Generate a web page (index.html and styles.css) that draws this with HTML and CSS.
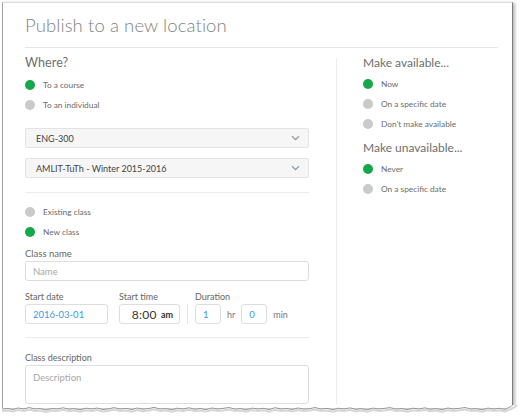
FILE: index.html
```html
<!DOCTYPE html>
<html>
<head>
<meta charset="utf-8">
<link rel="stylesheet" href="styles.css">
</head>
<body>
<div class="shot">
  <div class="frame">
    <div class="header"><h1 class="title">Publish to a new location</h1></div>
    <div class="cols">
      <div class="left">
        <div class="sec-title">Where?</div>
        <div class="radios r-where">
          <div class="radio on"><span class="dot"></span>To a course</div>
          <div class="radio"><span class="dot"></span>To an individual</div>
        </div>
        <div class="select s1"><span>ENG-300</span><svg class="chev" width="9" height="6" viewBox="0 0 9 6"><path d="M1 1.2 L4.5 4.5 L8 1.2" fill="none" stroke="#8fa0b4" stroke-width="1.3"/></svg></div>
        <div class="select s2"><span>AMLIT-TuTh - Winter 2015-2016</span><svg class="chev" width="9" height="6" viewBox="0 0 9 6"><path d="M1 1.2 L4.5 4.5 L8 1.2" fill="none" stroke="#8fa0b4" stroke-width="1.3"/></svg></div>
        <div class="hdiv d1"></div>
        <div class="radios r-class">
          <div class="radio"><span class="dot"></span>Existing class</div>
          <div class="radio on"><span class="dot"></span>New class</div>
        </div>
        <div class="lbl l-name">Class name</div>
        <div class="input full"><span class="ph">Name</span></div>
        <div class="row3">
          <div class="fld">
            <div class="lbl">Start date</div>
            <div class="input w-date blue">2016-03-01</div>
          </div>
          <div class="fld">
            <div class="lbl">Start time</div>
            <div class="input w-time"><span class="t">8:00</span><span class="am">am</span></div>
          </div>
          <div class="vsep"></div>
          <div class="fld">
            <div class="lbl">Duration</div>
            <div class="durrow">
              <div class="input w-num blue">1</div><span class="unit">hr</span>
              <div class="input w-num blue">0</div><span class="unit">min</span>
            </div>
          </div>
        </div>
        <div class="hdiv d2"></div>
        <div class="lbl l-desc">Class description</div>
        <div class="input area"><span class="ph">Description</span></div>
      </div>
      <div class="vline"></div>
      <div class="right">
        <div class="sec-title">Make available...</div>
        <div class="radios r-av">
          <div class="radio on"><span class="dot"></span>Now</div>
          <div class="radio"><span class="dot"></span>On a specific date</div>
          <div class="radio"><span class="dot"></span>Don't make available</div>
        </div>
        <div class="sec-title t-unav">Make unavailable...</div>
        <div class="radios r-unav">
          <div class="radio on"><span class="dot"></span>Never</div>
          <div class="radio"><span class="dot"></span>On a specific date</div>
        </div>
      </div>
    </div>
  </div>
  <svg class="tear" width="518" height="14" viewBox="0 0 518 14">
    <path d="M0,4 L6,3.5 L11,4.5 L16,3 L22,4 L27,2.5 L33,4 L38,3.5 L44,5 L50,3.5 L55,4 L61,2.8 L67,4.2 L72,3.6 L78,4.8 L84,3.2 L90,4 L95,3 L101,4.5 L107,3.8 L112,2.6 L118,4 L124,3.4 L130,4.6 L135,3 L141,4.2 L147,3.5 L152,2.4 L158,4 L164,3.6 L170,4.8 L175,3.2 L181,4 L187,2.8 L193,4.3 L198,3.5 L204,4.6 L210,3 L216,4 L221,3.4 L227,2.5 L233,4.1 L239,3.6 L244,4.8 L250,3.1 L256,4 L262,3.3 L267,4.6 L273,2.7 L279,4 L285,3.5 L290,4.5 L296,3 L302,4.1 L308,3.6 L313,2.5 L319,4 L325,3.4 L331,4.7 L336,3.2 L342,4 L348,2.9 L354,4.4 L359,3.6 L365,4.8 L371,3.1 L377,4 L382,3.4 L388,2.6 L394,4.1 L400,3.5 L405,4.6 L411,3.2 L417,4 L423,2.8 L428,4.3 L434,3.6 L440,4.7 L446,3 L451,4 L457,3.4 L463,2.5 L469,4.1 L474,3.6 L480,4.8 L486,3.1 L492,4 L497,3.3 L503,4.4 L509,1.5 L510.5,0 L518,0 L518,14 L0,14 Z" fill="#ffffff"/>
    <path d="M0,6 L6,5.5 L11,6.5 L16,5 L22,6 L27,4.5 L33,6 L38,5.5 L44,7 L50,5.5 L55,6 L61,4.8 L67,6.2 L72,5.6 L78,6.8 L84,5.2 L90,6 L95,5 L101,6.5 L107,5.8 L112,4.6 L118,6 L124,5.4 L130,6.6 L135,5 L141,6.2 L147,5.5 L152,4.4 L158,6 L164,5.6 L170,6.8 L175,5.2 L181,6 L187,4.8 L193,6.3 L198,5.5 L204,6.6 L210,5 L216,6 L221,5.4 L227,4.5 L233,6.1 L239,5.6 L244,6.8 L250,5.1 L256,6 L262,5.3 L267,6.6 L273,4.7 L279,6 L285,5.5 L290,6.5 L296,5 L302,6.1 L308,5.6 L313,4.5 L319,6 L325,5.4 L331,6.7 L336,5.2 L342,6 L348,4.9 L354,6.4 L359,5.6 L365,6.8 L371,5.1 L377,6 L382,5.4 L388,4.6 L394,6.1 L400,5.5 L405,6.6 L411,5.2 L417,6 L423,4.8 L428,6.3 L434,5.6 L440,6.7 L446,5 L451,6 L457,5.4 L463,4.5 L469,6.1 L474,5.6 L480,6.8 L486,5.1 L492,6 L497,5.3 L503,6.4 L509,4 L513,2 L515,0" fill="none" stroke="#d6d6d6" stroke-width="2"/>
    <path d="M0,4 L6,3.5 L11,4.5 L16,3 L22,4 L27,2.5 L33,4 L38,3.5 L44,5 L50,3.5 L55,4 L61,2.8 L67,4.2 L72,3.6 L78,4.8 L84,3.2 L90,4 L95,3 L101,4.5 L107,3.8 L112,2.6 L118,4 L124,3.4 L130,4.6 L135,3 L141,4.2 L147,3.5 L152,2.4 L158,4 L164,3.6 L170,4.8 L175,3.2 L181,4 L187,2.8 L193,4.3 L198,3.5 L204,4.6 L210,3 L216,4 L221,3.4 L227,2.5 L233,4.1 L239,3.6 L244,4.8 L250,3.1 L256,4 L262,3.3 L267,4.6 L273,2.7 L279,4 L285,3.5 L290,4.5 L296,3 L302,4.1 L308,3.6 L313,2.5 L319,4 L325,3.4 L331,4.7 L336,3.2 L342,4 L348,2.9 L354,4.4 L359,3.6 L365,4.8 L371,3.1 L377,4 L382,3.4 L388,2.6 L394,4.1 L400,3.5 L405,4.6 L411,3.2 L417,4 L423,2.8 L428,4.3 L434,3.6 L440,4.7 L446,3 L451,4 L457,3.4 L463,2.5 L469,4.1 L474,3.6 L480,4.8 L486,3.1 L492,4 L497,3.3 L503,4.4 L509,1.5 L510.5,0" fill="none" stroke="#8c8c8c" stroke-width="0.9"/>
  </svg>
</div>
</body>
</html>
```

FILE: styles.css
```css
* { box-sizing: border-box; }
html, body { margin: 0; padding: 0; background: #ffffff; }
body { font-family: Lato, "Open Sans", "Liberation Sans", sans-serif; color: #555; }

.shot { position: relative; width: 521px; height: 418px; }

.frame {
  margin: 2px 0 0 2px;
  width: 511px;
  height: 406px;
  border-left: 1px solid #a4a4a4;
  border-top: 1px solid #dcdcdc;
  border-right: 1px solid #7d7d7d;
  box-shadow: 2px 1px 3px rgba(0, 0, 0, 0.28);
  background: #fff;
  overflow: hidden;
}

.tear { position: absolute; left: 2px; top: 403px; }

.header {
  margin-left: 22px;
  width: 473px;
  padding: 10px 0 10px 0;
  border-bottom: 1px solid #e6e6e6;
}
.title {
  margin: 0;
  font-size: 18.5px;
  line-height: 24px;
  font-weight: 300;
  color: #828282;
  letter-spacing: 0.1px;
}

.cols { display: flex; padding-left: 22px; }
.left { width: 284px; padding-top: 6px; display: flex; flex-direction: column; }
.vline { width: 1px; background: #ececec; margin: 10px 0 0 27px; align-self: stretch; }
.right { padding: 6px 0 0 26px; }

.sec-title {
  font-size: 12.5px;
  line-height: 18px;
  color: #6e6e6e;
  font-weight: 400;
  letter-spacing: 0.1px;
}
.right .sec-title { font-size: 12px; letter-spacing: 0; }

.radios { display: flex; flex-direction: column; }
.radio {
  height: 20px;
  display: flex;
  align-items: center;
  font-size: 8.3px;
  color: #6b6b6b;
}
.dot {
  width: 10px;
  height: 10px;
  border-radius: 50%;
  background: #cacaca;
  margin-right: 8px;
  flex: none;
}
.radio.on .dot { background: #14a84a; }

.r-where { margin-top: 3px; }
.r-av { margin-top: 2px; }
.t-unav { margin-top: 5px; }
.r-unav { margin-top: 2px; }

.select {
  height: 20px;
  border: 1px solid #e3e3e3;
  border-radius: 2px;
  background: #f6f6f6;
  display: flex;
  align-items: center;
  justify-content: space-between;
  padding: 0 8px 0 10px;
  font-size: 9px;
  color: #444;
}
.s1 { margin-top: 13px; }
.s2 { margin-top: 10px; }
.chev { display: block; }

.hdiv { height: 1px; background: #ebebeb; }
.d1 { margin-top: 14px; }
.r-class { margin-top: 9px; }
.d2 { margin-top: 13px; }

.lbl {
  font-size: 9px;
  line-height: 12px;
  color: #666;
  margin-bottom: 1px;
}
.l-name { margin-top: 6px; font-size: 9.5px; }
.l-desc { margin-top: 14px; }

.input {
  height: 20px;
  border: 1px solid #dedede;
  border-radius: 3px;
  background: #fff;
  display: flex;
  align-items: center;
  padding: 0 7px;
  font-size: 9.5px;
  color: #444;
}
.ph { color: #a8a8a8; }
.blue { color: #3c9be0; }

.row3 { display: flex; margin-top: 10px; align-items: flex-end; }
.w-date { width: 83px; }
.w-time { width: 61px; justify-content: flex-end; padding-right: 6px; }
.fld + .fld { margin-left: 11px; }
.vsep { width: 1px; height: 20px; background: #e6e6e6; margin: 0 7px 0 7px; }
.t { font-size: 12px; color: #333; letter-spacing: 0.3px; }
.am { font-size: 9px; color: #333; font-weight: 700; margin-left: 4px; }
.durrow { display: flex; align-items: center; }
.w-num { width: 26px; }
.unit { font-size: 9px; color: #777; margin: 0 6px 0 6px; }

.area {
  height: 39px;
  align-items: flex-start;
  padding-top: 6px;
}
```
